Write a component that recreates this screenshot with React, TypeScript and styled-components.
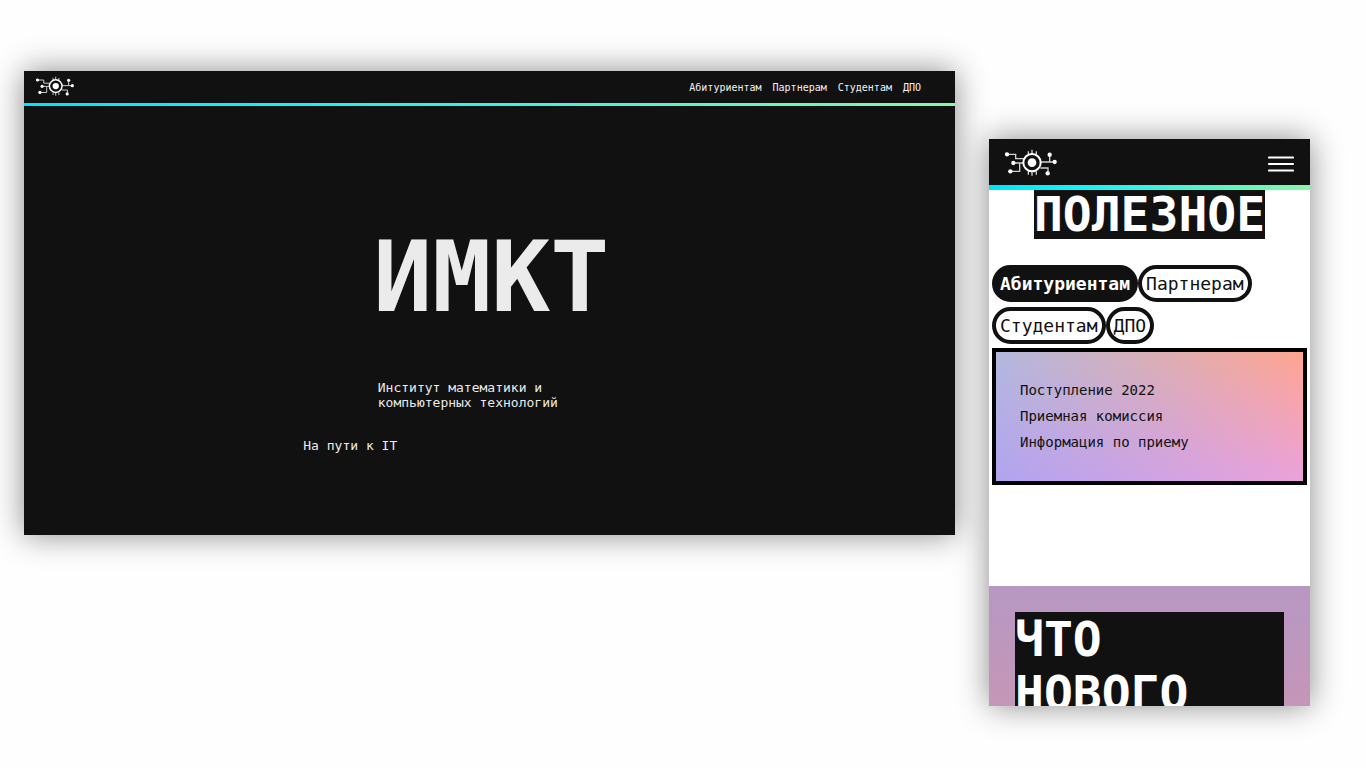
import React, { useState } from "react";
import styled, { createGlobalStyle } from "styled-components";

const GlobalStyle = createGlobalStyle`
  *, *::before, *::after { box-sizing: border-box; }
  body {
    margin: 0;
    background: #fefefe;
    font-family: "DejaVu Sans Mono", "Liberation Mono", monospace;
  }
  h1, h2, p, ul { margin: 0; padding: 0; }
  a { color: inherit; text-decoration: none; }
`;

const ink = "#111111";
const accent = "linear-gradient(90deg, #00e4fd, #13f0f8 25%, #88f7a8)";

const Showcase = styled.main`
  display: grid;
  grid-template-columns: 931fr 321fr;
  gap: 34px;
  align-items: start;
  padding: 71px 56px 62px 24px;
`;

const Screen = styled.section<{ $ratio: string; $top?: number }>`
  aspect-ratio: ${(p) => p.$ratio};
  margin-top: ${(p) => p.$top ?? 0}px;
  overflow: hidden;
  box-shadow: 0 0 30px rgba(0, 0, 0, 0.46);
`;

const DesktopScreen = styled(Screen)`
  background: ${ink};
  color: #ebebeb;
`;

const PhoneScreen = styled(Screen)`
  background: #ffffff;
  color: ${ink};
`;

const TopBar = styled.header<{ $height: number; $pad: string }>`
  display: flex;
  align-items: center;
  justify-content: space-between;
  height: ${(p) => p.$height}px;
  padding: ${(p) => p.$pad};
  background: ${ink};
`;

const AccentLine = styled.div<{ $size: number }>`
  height: ${(p) => p.$size}px;
  background: ${accent};
`;

const LogoLink = styled.a`
  display: block;
  line-height: 0;
`;

const Nav = styled.nav`
  display: flex;
  gap: 11px;
  padding-top: 4px;
  font-size: 10px;
  line-height: 16px;
  color: #f2f2f2;
`;

const Hero = styled.div`
  padding-top: 121px;
`;

const HeroTitle = styled.h1`
  padding-left: 37.5%;
  font-size: 98px;
  line-height: 100px;
  font-weight: 700;
`;

const HeroText = styled.p`
  margin-top: 53px;
  padding-left: 38%;
  font-size: 13px;
  line-height: 15px;
`;

const Motto = styled.p`
  padding: 28px 0 0 30%;
  font-size: 13px;
  line-height: 15px;
`;

const MenuButton = styled.button`
  display: flex;
  padding: 4px 0 0;
  border: 0;
  background: none;
  color: #ffffff;
`;

const Useful = styled.div`
  display: flex;
  flex-direction: column;
  padding: 0 3px 101px;
`;

const SectionTitle = styled.h2`
  align-self: center;
  background: ${ink};
  color: #ffffff;
  font-size: 48px;
  line-height: 49px;
  font-weight: 700;
`;

const Tabs = styled.div`
  display: flex;
  flex-wrap: wrap;
  row-gap: 5px;
  margin: 26px 0 4px;
`;

const Tab = styled.button<{ $active: boolean }>`
  height: 37px;
  padding: 0 4px;
  border: 4px solid ${ink};
  border-radius: 19px;
  background: ${(p) => (p.$active ? ink : "#ffffff")};
  color: ${(p) => (p.$active ? "#ffffff" : ink)};
  font-family: inherit;
  font-size: 18px;
  line-height: 24px;
  font-weight: ${(p) => (p.$active ? 700 : 400)};
`;

const LinkPanel = styled.div`
  position: relative;
  padding: 25px 24px 26px;
  border: 4px solid #000000;
  background: linear-gradient(90deg, #b2a4f0, #eba2dc);

  &::before {
    content: "";
    position: absolute;
    inset: 0;
    background: linear-gradient(90deg, #b3b8de, #ffa58f);
    mask-image: linear-gradient(#000000, transparent);
  }
`;

const LinkList = styled.ul`
  position: relative;
  list-style: none;
  font-size: 14px;
  line-height: 26px;
`;

const News = styled.div`
  padding: 26px;
  background: linear-gradient(#b798c3, #c596b7 120px);
`;

const NewsTitle = styled.h2`
  background: ${ink};
  color: #ffffff;
  font-size: 48px;
  line-height: 54px;
  font-weight: 700;
`;

const Logo = ({ width, height }: { width: number; height: number }) => (
  <svg width={width} height={height} viewBox="16 9 156 81" role="img" aria-label="ИМКТ">
    <g fill="none" stroke="#d0d0d0" strokeWidth="4">
      <path d="M22 25H48V38H72M40 51H70M32 76H60V52M122 48H164M150 26V48M122 66H145V81" />
      <path d="M86 16V26M97 11V24M110 16V26M86 76V86M97 78V89M110 76V86" />
    </g>
    <circle cx="97" cy="50" r="26" fill="#111111" stroke="#ffffff" strokeWidth="6" />
    <g fill="#ffffff">
      <circle cx="97" cy="50" r="13" />
      <circle cx="22" cy="25" r="6.5" />
      <circle cx="41" cy="51" r="6.5" />
      <circle cx="32" cy="76" r="6.5" />
      <circle cx="150" cy="26" r="6.5" />
      <circle cx="165" cy="48" r="6.5" />
      <circle cx="144" cy="82" r="6.5" />
    </g>
  </svg>
);

const MenuIcon = () => (
  <svg width="26" height="16" viewBox="0 0 26 16" aria-hidden="true">
    <path d="M1 1.5H25M1 8H25M1 14.5H25" stroke="currentColor" strokeWidth="2.2" strokeLinecap="round" />
  </svg>
);

const audiences = ["Абитуриентам", "Партнерам", "Студентам", "ДПО"];
const links = ["Поступление 2022", "Приемная комиссия", "Информация по приему"];

export default function App() {
  const [active, setActive] = useState(audiences[0]);

  return (
    <>
      <GlobalStyle />
      <Showcase>
        <DesktopScreen $ratio="931 / 464">
          <TopBar $height={32} $pad="0 34px 2px 12px">
            <LogoLink href="#">
              <Logo width={38} height={20} />
            </LogoLink>
            <Nav>
              {audiences.map((name) => (
                <a href="#" key={name}>{name}</a>
              ))}
            </Nav>
          </TopBar>
          <AccentLine $size={3} />
          <Hero>
            <HeroTitle>ИМКТ</HeroTitle>
            <HeroText>
              Институт математики и<br />
              компьютерных технологий
            </HeroText>
          </Hero>
          <Motto>На пути к IT</Motto>
        </DesktopScreen>

        <PhoneScreen $ratio="321 / 567" $top={68}>
          <TopBar $height={46} $pad="0 16px 0 16px">
            <LogoLink href="#">
              <Logo width={52} height={27} />
            </LogoLink>
            <MenuButton type="button" aria-label="Меню">
              <MenuIcon />
            </MenuButton>
          </TopBar>
          <AccentLine $size={5} />
          <Useful>
            <SectionTitle>ПОЛЕЗНОЕ</SectionTitle>
            <Tabs role="tablist">
              {audiences.map((name) => (
                <Tab
                  key={name}
                  type="button"
                  role="tab"
                  aria-selected={name === active}
                  $active={name === active}
                  onClick={() => setActive(name)}
                >
                  {name}
                </Tab>
              ))}
            </Tabs>
            <LinkPanel role="tabpanel" aria-label={active}>
              <LinkList>
                {links.map((text) => (
                  <li key={text}><a href="#">{text}</a></li>
                ))}
              </LinkList>
            </LinkPanel>
          </Useful>
          <News>
            <NewsTitle>
              ЧТО<br />НОВОГО
            </NewsTitle>
          </News>
        </PhoneScreen>
      </Showcase>
    </>
  );
}
